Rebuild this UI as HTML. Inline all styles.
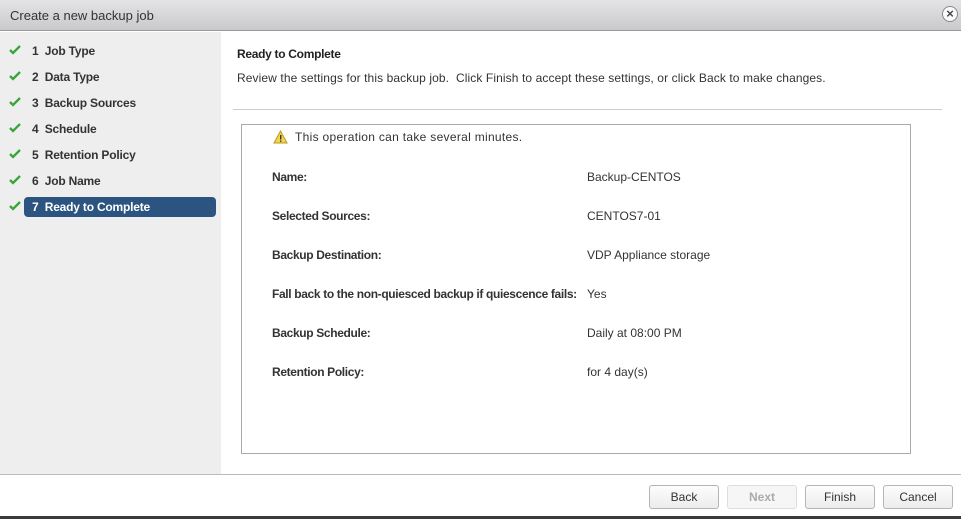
<!DOCTYPE html>
<html><head><style>
*{margin:0;padding:0;box-sizing:border-box}
body{width:961px;height:519px;overflow:hidden;background:#fff;font-family:"Liberation Sans",Arial,sans-serif;font-size:12px;color:#333;position:relative}
.title{position:absolute;left:0;top:0;width:961px;height:31px;background:linear-gradient(#e4e4e6,#c9c9cc);border-bottom:1px solid #9a9a9a;}
.title span{position:absolute;left:10px;top:8px;font-size:13px;color:#333}
.close{position:absolute;left:942px;top:6px;width:16px;height:16px;border-radius:50%;border:1px solid #888;background:#fafafa;font-size:13px;line-height:13px;text-align:center;font-weight:bold;color:#444}
.side{position:absolute;left:0;top:32px;width:221px;height:442px;background:#eeeeee}
.step{position:absolute;left:0;height:20px;width:221px;font-size:12px;color:#333;font-weight:bold;letter-spacing:-0.2px}
.step .ck{position:absolute;left:8px;top:2px}
.step .t{position:absolute;left:32px;top:3px}
.step.act .bg{position:absolute;left:24px;top:0;width:192px;height:20px;background:#2b5480;border-radius:4px}
.step.act .t{color:#fff}
.h{position:absolute;left:237px;top:47px;font-size:12px;color:#222;font-weight:bold;letter-spacing:-0.3px}
.d{position:absolute;left:237px;top:71px;font-size:12px;color:#333;letter-spacing:.1px}
.hr{position:absolute;left:233px;top:109px;width:709px;height:1px;background:#ccc}
.box{position:absolute;left:241px;top:124px;width:670px;height:330px;border:1px solid #aaa}
.l{position:absolute;left:272px;font-weight:bold;color:#333;letter-spacing:-0.35px}
.v{position:absolute;left:587px;color:#333}
.foot{position:absolute;left:0;top:474px;width:961px;height:1px;background:#bbb}
.btn{position:absolute;top:485px;height:24px;border:1px solid #b5b5b5;border-radius:3px;background:linear-gradient(#fdfdfd,#ececec);text-align:center;line-height:22px;font-size:12px;color:#333}
.bottom{position:absolute;left:0;top:516px;width:961px;height:3px;background:#3a3a3a}
</style></head><body>
<div class="title"><span>Create a new backup job</span><div class="close">×</div></div>
<div class="side"></div>
<div class="step" style="top:41px"><svg class="ck" width="14" height="14"><path d="M2 7l3 3 7-7" stroke="#3aa536" stroke-width="2.3" fill="none"/></svg><span class="t">1&nbsp; Job Type</span></div>
<div class="step" style="top:67px"><svg class="ck" width="14" height="14"><path d="M2 7l3 3 7-7" stroke="#3aa536" stroke-width="2.3" fill="none"/></svg><span class="t">2&nbsp; Data Type</span></div>
<div class="step" style="top:93px"><svg class="ck" width="14" height="14"><path d="M2 7l3 3 7-7" stroke="#3aa536" stroke-width="2.3" fill="none"/></svg><span class="t">3&nbsp; Backup Sources</span></div>
<div class="step" style="top:119px"><svg class="ck" width="14" height="14"><path d="M2 7l3 3 7-7" stroke="#3aa536" stroke-width="2.3" fill="none"/></svg><span class="t">4&nbsp; Schedule</span></div>
<div class="step" style="top:145px"><svg class="ck" width="14" height="14"><path d="M2 7l3 3 7-7" stroke="#3aa536" stroke-width="2.3" fill="none"/></svg><span class="t">5&nbsp; Retention Policy</span></div>
<div class="step" style="top:171px"><svg class="ck" width="14" height="14"><path d="M2 7l3 3 7-7" stroke="#3aa536" stroke-width="2.3" fill="none"/></svg><span class="t">6&nbsp; Job Name</span></div>
<div class="step act" style="top:197px"><div class="bg"></div><svg class="ck" width="14" height="14"><path d="M2 7l3 3 7-7" stroke="#3aa536" stroke-width="2.3" fill="none"/></svg><span class="t">7&nbsp; Ready to Complete</span></div>
<div class="h">Ready to Complete</div>
<div class="d">Review the settings for this backup job.&nbsp; Click Finish to accept these settings, or click Back to make changes.</div>
<div class="hr"></div>
<div class="box"></div>
<svg style="position:absolute;left:273px;top:130px" width="15" height="14"><path d="M7.5 1L14 13H1z" fill="#f5d742" stroke="#b8962a"/><rect x="7" y="5" width="1.4" height="4.5" fill="#333"/><rect x="7" y="10.5" width="1.4" height="1.4" fill="#333"/></svg>
<div style="position:absolute;left:295px;top:130px;color:#333;letter-spacing:.3px">This operation can take several minutes.</div>
<div class="l" style="top:170px">Name:</div><div class="v" style="top:170px">Backup-CENTOS</div>
<div class="l" style="top:209px">Selected Sources:</div><div class="v" style="top:209px">CENTOS7-01</div>
<div class="l" style="top:248px">Backup Destination:</div><div class="v" style="top:248px">VDP Appliance storage</div>
<div class="l" style="top:287px">Fall back to the non-quiesced backup if quiescence fails:</div><div class="v" style="top:287px">Yes</div>
<div class="l" style="top:326px">Backup Schedule:</div><div class="v" style="top:326px">Daily at 08:00 PM</div>
<div class="l" style="top:365px">Retention Policy:</div><div class="v" style="top:365px">for 4 day(s)</div>
<div class="foot"></div>
<div class="btn" style="left:649px;width:70px">Back</div>
<div class="btn" style="left:727px;width:70px;color:#aaa;font-weight:bold;border-color:#ddd;background:#f6f6f6">Next</div>
<div class="btn" style="left:805px;width:70px">Finish</div>
<div class="btn" style="left:883px;width:70px">Cancel</div>
<div class="bottom"></div>
</body></html>
